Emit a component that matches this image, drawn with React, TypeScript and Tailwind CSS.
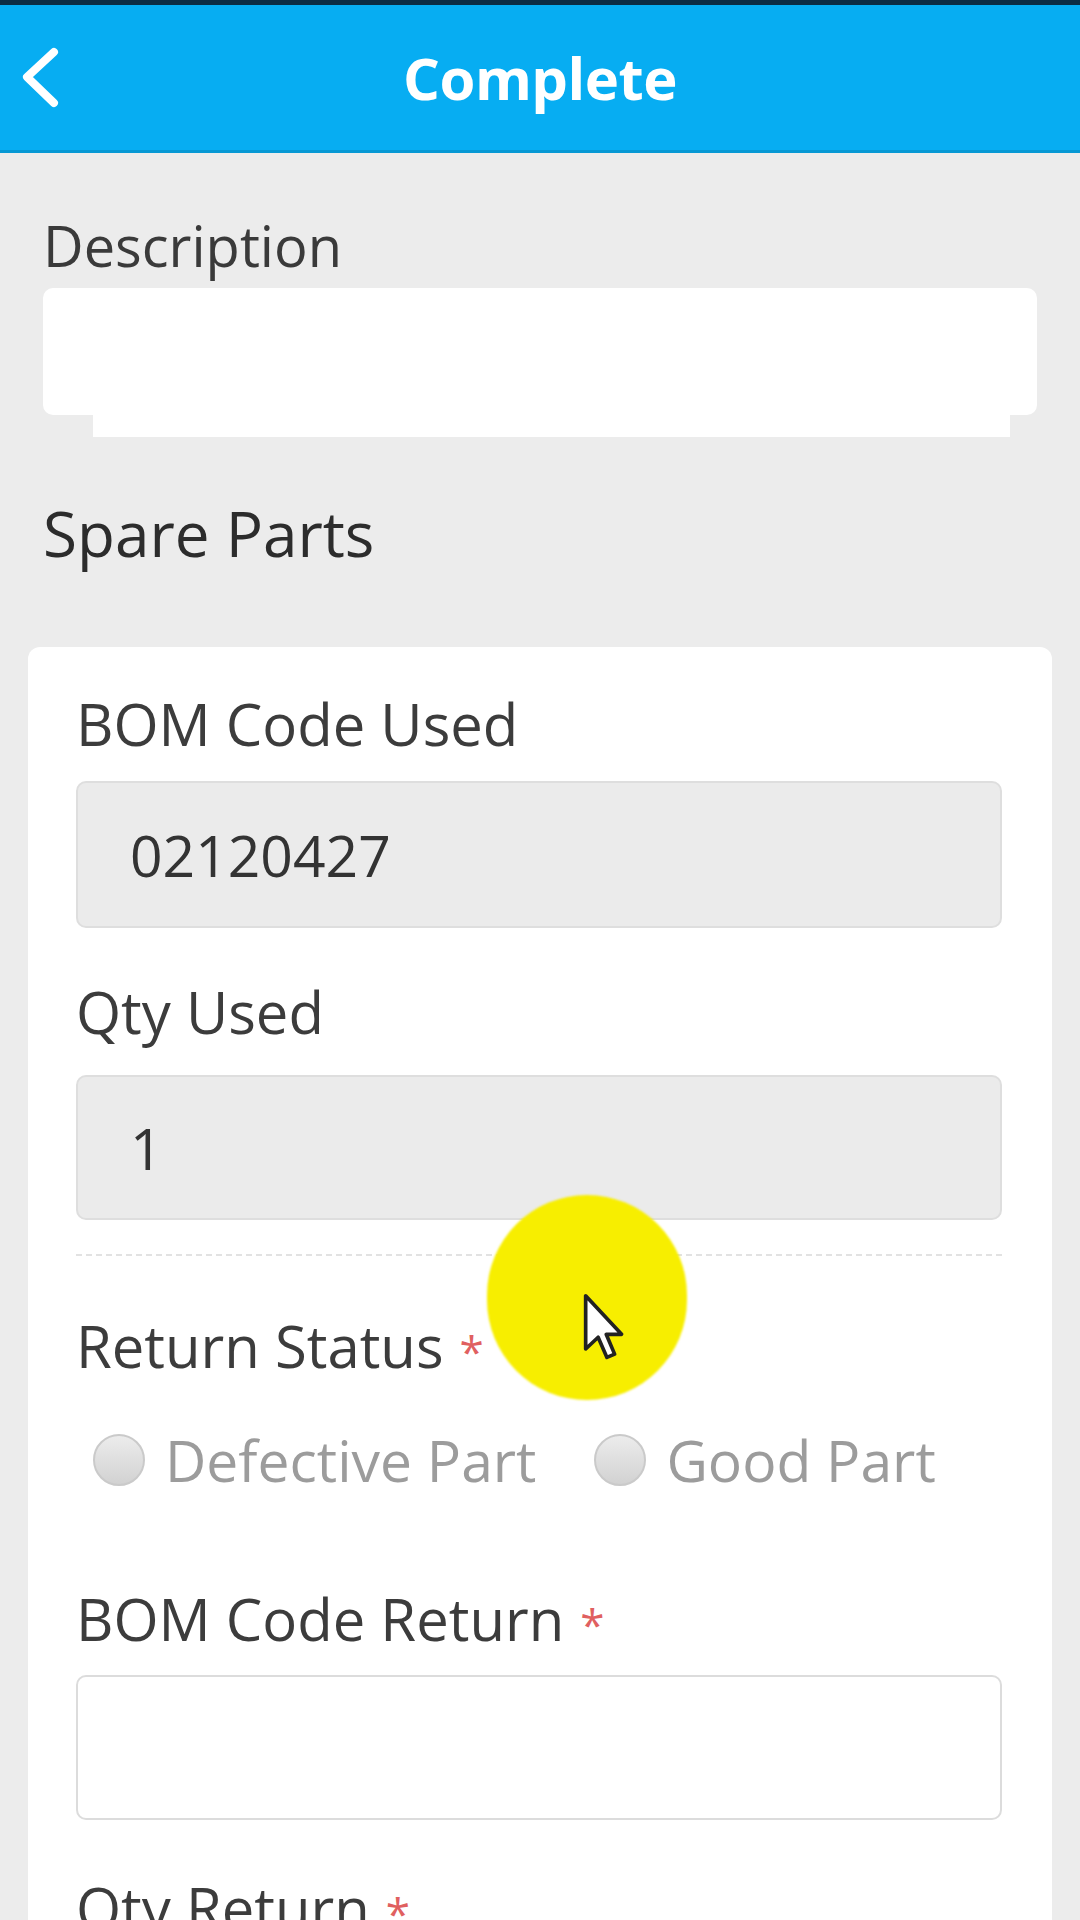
import React from 'react';

const font = { fontFamily: '"Open Sans", "Noto Sans", Arial, sans-serif' };

function Label({ text, required, className }: { text: string; required?: boolean; className?: string }) {
  return (
    <div className={`text-[58px] leading-[64px] text-[#3c3c3c] ${className ?? ''}`}>
      {text}
      {required && <span className="ml-[16px] text-[44px] leading-none text-[#e06060]">*</span>}
    </div>
  );
}

function Radio({ label }: { label: string }) {
  return (
    <div className="flex items-center gap-[20px]">
      <span className="w-[52px] h-[52px] rounded-full border-2 border-[#cacaca] bg-linear-to-b from-[#ececec] to-[#d2d2d2]" />
      <span className="text-[57px] leading-[68px] text-[#9c9c9c]">{label}</span>
    </div>
  );
}

export default function App() {
  return (
    <div className="relative h-[1920px] w-[1080px] overflow-hidden bg-[#ececec]" style={font}>
      <div className="h-[5px] bg-[#0c2c44]" />
      <header className="grid grid-cols-[1fr_auto_1fr] items-center h-[148px] bg-[#07adf2] border-b-[3px] border-[#0698d4]">
        <div className="pl-[20px]">
          <svg width="44" height="64" viewBox="0 0 44 64" fill="none">
            <polyline points="34,6 7,31 34,57" stroke="white" strokeWidth="8" strokeLinecap="round" strokeLinejoin="round" />
          </svg>
        </div>
        <h1 className="text-[58px] font-bold text-white tracking-[-0.5px]">Complete</h1>
        <div />
      </header>

      <main>
        <section className="px-[43px] pt-[58px]">
          <div className="text-[56px] leading-[68px] text-[#3a3a3a]">Description</div>
          <div className="mt-[9px] h-[127px] rounded-[10px] bg-white" />
          <div className="ml-[50px] mr-[27px] h-[22px] bg-white" />
          <div className="mt-[59px] text-[62px] leading-[74px] text-[#2c2c2c]">Spare Parts</div>
        </section>

        <section className="mx-[28px] mt-[77px] rounded-[12px] bg-white pl-[48px] pr-[50px] pt-[45px] pb-[80px]">
          <Label text="BOM Code Used" />
          <div className="mt-[25px] h-[147px] flex items-center rounded-[10px] border-2 border-[#dedede] bg-[#ebebeb] pl-[52px] text-[57px] leading-[68px] text-[#333]">
            02120427
          </div>

          <Label text="Qty Used" className="mt-[52px]" />
          <div className="mt-[31px] h-[145px] flex items-center rounded-[10px] border-2 border-[#dedede] bg-[#ebebeb] pl-[52px] text-[57px] leading-[68px] text-[#333]">
            1
          </div>

          <div className="mt-[34px] border-t-2 border-dashed border-[#e2e2e2]" />

          <Label text="Return Status" required className="mt-[58px]" />
          <div className="mt-[48px] ml-[17px] flex items-center gap-[58px]">
            <Radio label="Defective Part" />
            <Radio label="Good Part" />
          </div>

          <Label text="BOM Code Return" required className="mt-[93px]" />
          <div className="mt-[24px] h-[145px] rounded-[10px] border-2 border-[#dcdcdc] bg-white" />

          <Label text="Qty Return" required className="mt-[56px]" />
          <div className="mt-[24px] h-[145px] rounded-[10px] border-2 border-[#dcdcdc] bg-white" />
        </section>
      </main>

      {/* cursor highlight from the screen recording */}
      <div className="absolute left-[487px] top-[1195px] w-[200px] h-[205px] rounded-full bg-[#f7ee00] blur-[1px]" />
      <svg className="absolute left-[582px] top-[1292px]" width="44" height="70" viewBox="0 0 12 19" fill="none">
        <path d="M1 1 L1 15.5 L4.4 12.3 L6.8 17.8 L8.9 16.9 L6.6 11.5 L10.8 11.5 Z" fill="white" stroke="#222" strokeWidth="1" strokeLinejoin="round" />
      </svg>
    </div>
  );
}
